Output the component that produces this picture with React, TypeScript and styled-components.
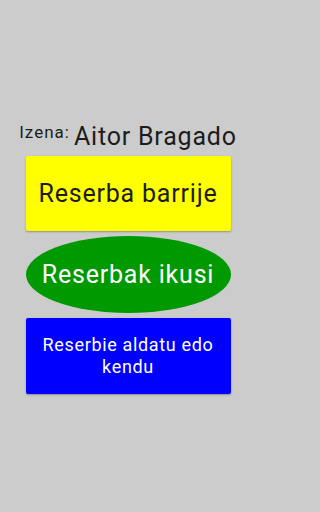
import React from 'react';
import styled, { createGlobalStyle } from 'styled-components';

const GlobalStyle = createGlobalStyle`
  html, body {
    margin: 0;
    padding: 0;
    background: #cccccc;
  }
  body {
    font-family: Roboto, 'Noto Sans', sans-serif;
  }
`;

const Screen = styled.div`
  width: 256px;
  height: 512px;
  box-sizing: border-box;
  padding-top: 122px;
  display: flex;
  flex-direction: column;
  align-items: center;
  gap: 5px;
  background: #cccccc;
`;

const UserRow = styled.div`
  display: flex;
  align-items: flex-start;
  gap: 4px;
  color: #1c1c1c;
`;

const Label = styled.span`
  font-size: 17px;
  line-height: 20px;
  letter-spacing: 1px;
`;

const UserName = styled.span`
  font-size: 25px;
  line-height: 29px;
  letter-spacing: 0.8px;
`;

const ActionButton = styled.button<{ bg: string; fg: string; h: number; oval?: boolean; size: number }>`
  width: 205px;
  height: ${p => p.h}px;
  border: none;
  border-radius: ${p => (p.oval ? '50%' : '2px')};
  background: ${p => p.bg};
  color: ${p => p.fg};
  font-family: Roboto, 'Noto Sans', sans-serif;
  font-size: ${p => p.size}px;
  line-height: ${p => (p.size < 20 ? '22px' : '30px')};
  letter-spacing: ${p => (p.size < 20 ? '0.65px' : '0.8px')};
  padding: 0 8px;
  box-shadow: ${p => (p.oval ? 'none' : '0 1px 2px rgba(0, 0, 0, 0.3)')};
  display: flex;
  align-items: center;
  justify-content: center;
  text-align: center;
  cursor: pointer;
`;

export default function App() {
  return (
    <>
      <GlobalStyle />
      <Screen>
        <UserRow>
          <Label>Izena:</Label>
          <UserName>Aitor Bragado</UserName>
        </UserRow>
        <ActionButton bg="#ffff00" fg="#1c1c1c" h={75} size={25}>
          Reserba barrije
        </ActionButton>
        <ActionButton bg="#009900" fg="#ffffff" h={77} size={25} oval>
          Reserbak ikusi
        </ActionButton>
        <ActionButton bg="#0000ff" fg="#ffffff" h={76} size={18}>
          Reserbie aldatu edo kendu
        </ActionButton>
      </Screen>
    </>
  );
}
